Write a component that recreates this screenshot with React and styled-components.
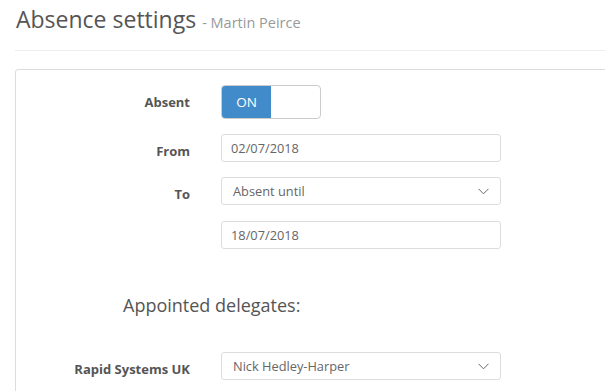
import React from "react";
import styled, { createGlobalStyle } from "styled-components";

const Global = createGlobalStyle`
  html, body { margin: 0; padding: 0; background: #fff; overflow: hidden; }
  body { font-family: "Open Sans", "Liberation Sans", sans-serif; color: #555; }
  * { box-sizing: border-box; }
`;

const Page = styled.div`
  width: 660px;
  padding: 0 0 0 15px;
`;

const Header = styled.header`
  padding: 3px 0 0 1px;
  height: 51px;
  border-bottom: 1px solid #eee;
`;

const Title = styled.h1`
  margin: 0;
  font-size: 23px;
  line-height: 33px;
  height: 33px;
  font-weight: 400;
  color: #555;
`;

const Sub = styled.small`
  font-size: 14.5px;
  line-height: 1;
  color: #999;
  font-weight: 400;
`;

const Panel = styled.section`
  margin-top: 18px;
  border: 1px solid #ddd;
  border-radius: 3px;
  padding: 15px 0 40px 0;
  min-height: 400px;
`;

const Form = styled.div`
  display: grid;
  grid-template-columns: 174px 280px;
  column-gap: 31px;
  row-gap: 15px;
  align-items: start;
`;

const Label = styled.label`
  text-align: right;
  font-weight: 700;
  font-size: 13px;
  line-height: 20px;
  padding-top: 7px;
  color: #555;
  white-space: nowrap;
`;

const Empty = styled.div``;

const Toggle = styled.div`
  display: flex;
  width: 100px;
  height: 34px;
  border: 1px solid #ccc;
  border-radius: 4px;
  overflow: hidden;
`;

const ToggleOn = styled.span`
  width: 49px;
  background: #428bca;
  color: #fff;
  font-size: 13.5px;
  display: flex;
  align-items: center;
  justify-content: center;
`;

const Input = styled.div`
  height: 28px;
  border: 1px solid #ddd;
  border-radius: 3px;
  padding: 0 ${(p) => (p.$select ? "11px" : "9px")};
  display: flex;
  align-items: center;
  justify-content: space-between;
  font-size: 12.8px;
  color: #666;
  margin-top: ${(p) => p.$mt || 0}px;
`;

const Chevron = () => (
  <svg width="11" height="7" viewBox="0 0 11 7" fill="none">
    <polyline points="0.5,0.8 5.5,5.8 10.5,0.8" stroke="#666" strokeWidth="1" />
  </svg>
);

const Heading = styled.h2`
  margin: 43px 0 34px 107px;
  font-size: 18px;
  line-height: 26px;
  font-weight: 400;
  color: #555;
`;

export default function App() {
  return (
    <Page>
      <Global />
      <Header>
        <Title>
          Absence settings <Sub>- Martin Peirce</Sub>
        </Title>
      </Header>
      <Panel>
        <Form>
          <Label>Absent</Label>
          <Toggle>
            <ToggleOn>ON</ToggleOn>
          </Toggle>
          <Label>From</Label>
          <Input>02/07/2018</Input>
          <Label>To</Label>
          <Input $select>
            Absent until <Chevron />
          </Input>
          <Empty />
          <Input $mt={1}>18/07/2018</Input>
        </Form>
        <Heading>Appointed delegates:</Heading>
        <Form>
          <Label>Rapid Systems UK</Label>
          <Input $select>
            Nick Hedley-Harper <Chevron />
          </Input>
        </Form>
      </Panel>
    </Page>
  );
}
